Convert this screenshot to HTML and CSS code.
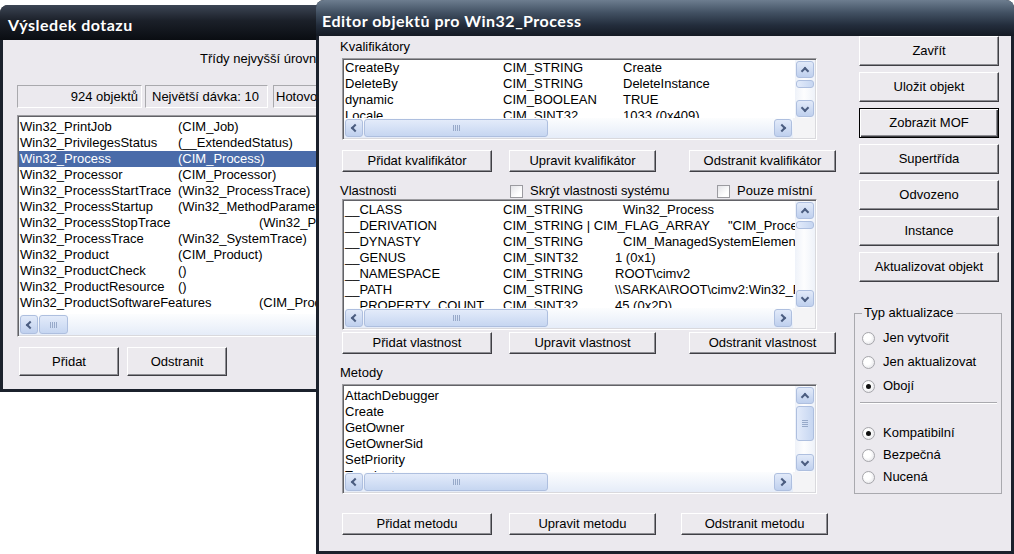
FILE: index.html
```html
<!DOCTYPE html>
<html lang="cs">
<head>
<meta charset="utf-8">
<title>Editor objektů pro Win32_Process</title>
<link rel="stylesheet" href="styles.css">
</head>
<body>
<div class="desk">
  <section class="win win-back">
    <div class="title">Výsledek dotazu</div>
    <div class="body back-body">
      <div class="note">Třídy nejvyšší úrovně</div>
      <div class="status">
        <span class="panel p1">924 objektů</span>
        <span class="panel p2">Největší dávka: 10</span>
        <span class="panel p3">Hotovo</span>
      </div>
      <div class="listbox lb-classes">
        <div class="lb-main">
          <div class="rows rows-classes">
            <div class="row"><span class="cn">Win32_PrintJob</span><span>(CIM_Job)</span></div>
            <div class="row"><span class="cn">Win32_PrivilegesStatus</span><span>(__ExtendedStatus)</span></div>
            <div class="row sel"><span class="cn">Win32_Process</span><span>(CIM_Process)</span></div>
            <div class="row"><span class="cn">Win32_Processor</span><span>(CIM_Processor)</span></div>
            <div class="row"><span class="cn">Win32_ProcessStartTrace</span><span>(Win32_ProcessTrace)</span></div>
            <div class="row"><span class="cn">Win32_ProcessStartup</span><span>(Win32_MethodParameterClass)</span></div>
            <div class="row"><span class="cn far">Win32_ProcessStopTrace</span><span>(Win32_ProcessTrace)</span></div>
            <div class="row"><span class="cn">Win32_ProcessTrace</span><span>(Win32_SystemTrace)</span></div>
            <div class="row"><span class="cn">Win32_Product</span><span>(CIM_Product)</span></div>
            <div class="row"><span class="cn">Win32_ProductCheck</span><span>()</span></div>
            <div class="row"><span class="cn">Win32_ProductResource</span><span>()</span></div>
            <div class="row"><span class="cn far">Win32_ProductSoftwareFeatures</span><span>(CIM_ProductSoftwareFeatures)</span></div>
          </div>
        </div>
        <div class="hscroll hs-tall">
          <span class="sbtn left"></span>
          <span class="track"><span class="thumb hthumb th-back"></span></span>
        </div>
      </div>
      <div class="btnrow back-btns">
        <div class="btn bw">Přidat</div>
        <div class="btn bw">Odstranit</div>
      </div>
    </div>
  </section>

  <section class="win win-front">
    <div class="title">Editor objektů pro Win32_Process</div>
    <div class="body front-body">
      <div class="leftcol">
        <div class="lbl">Kvalifikátory</div>
        <div class="listbox lb-q">
          <div class="lb-main">
            <div class="rows rows-q">
              <div class="row"><span class="cn">CreateBy</span><span class="ct">CIM_STRING</span><span>Create</span></div>
              <div class="row"><span class="cn">DeleteBy</span><span class="ct">CIM_STRING</span><span>DeleteInstance</span></div>
              <div class="row"><span class="cn">dynamic</span><span class="ct">CIM_BOOLEAN</span><span>TRUE</span></div>
              <div class="row"><span class="cn">Locale</span><span class="ct">CIM_SINT32</span><span>1033 (0x409)</span></div>
            </div>
            <div class="vscroll">
              <span class="sbtn up"></span>
              <span class="track"><span class="thumb vthumb vt-small"></span></span>
              <span class="sbtn down"></span>
            </div>
          </div>
          <div class="hscroll">
            <span class="sbtn left"></span>
            <span class="track"><span class="thumb hthumb th-main"></span></span>
            <span class="sbtn right"></span>
            <span class="corner"></span>
          </div>
        </div>
        <div class="btnrow">
          <div class="btn b1">Přidat kvalifikátor</div>
          <div class="btn b2">Upravit kvalifikátor</div>
          <div class="btn b3">Odstranit kvalifikátor</div>
        </div>

        <div class="propbar">
          <span class="lbl plbl">Vlastnosti</span>
          <span class="chk chk1"><span class="cb"></span>Skrýt vlastnosti systému</span>
          <span class="chk"><span class="cb"></span>Pouze místní</span>
        </div>
        <div class="listbox lb-p">
          <div class="lb-main">
            <div class="rows rows-p">
              <div class="row"><span class="cn">__CLASS</span><span class="ct">CIM_STRING</span><span>Win32_Process</span></div>
              <div class="row"><span class="cn">__DERIVATION</span><span class="ct ct-wide">CIM_STRING | CIM_FLAG_ARRAY</span><span>"CIM_Process","CIM_LogicalElement"</span></div>
              <div class="row"><span class="cn">__DYNASTY</span><span class="ct">CIM_STRING</span><span>CIM_ManagedSystemElement</span></div>
              <div class="row"><span class="cn">__GENUS</span><span class="ct ct-short">CIM_SINT32</span><span>1 (0x1)</span></div>
              <div class="row"><span class="cn">__NAMESPACE</span><span class="ct ct-short">CIM_STRING</span><span>ROOT\cimv2</span></div>
              <div class="row"><span class="cn">__PATH</span><span class="ct ct-short">CIM_STRING</span><span>\\SARKA\ROOT\cimv2:Win32_Process</span></div>
              <div class="row"><span class="cn">__PROPERTY_COUNT</span><span class="ct ct-short">CIM_SINT32</span><span>45 (0x2D)</span></div>
            </div>
            <div class="vscroll">
              <span class="sbtn up"></span>
              <span class="track"><span class="thumb vthumb vt-small"></span></span>
              <span class="sbtn down"></span>
            </div>
          </div>
          <div class="hscroll">
            <span class="sbtn left"></span>
            <span class="track"><span class="thumb hthumb th-main"></span></span>
            <span class="sbtn right"></span>
            <span class="corner"></span>
          </div>
        </div>
        <div class="btnrow btnrow-p">
          <div class="btn b1">Přidat vlastnost</div>
          <div class="btn b2">Upravit vlastnost</div>
          <div class="btn b3">Odstranit vlastnost</div>
        </div>

        <div class="lbl mlbl">Metody</div>
        <div class="listbox lb-m">
          <div class="lb-main">
            <div class="rows rows-m">
              <div class="row">AttachDebugger</div>
              <div class="row">Create</div>
              <div class="row">GetOwner</div>
              <div class="row">GetOwnerSid</div>
              <div class="row">SetPriority</div>
              <div class="row">Terminate</div>
            </div>
            <div class="vscroll">
              <span class="sbtn up"></span>
              <span class="track"><span class="thumb vthumb vt-big"></span></span>
              <span class="sbtn down"></span>
            </div>
          </div>
          <div class="hscroll">
            <span class="sbtn left"></span>
            <span class="track"><span class="thumb hthumb th-main"></span></span>
            <span class="sbtn right"></span>
            <span class="corner"></span>
          </div>
        </div>
        <div class="btnrow btnrow-m">
          <div class="btn b1">Přidat metodu</div>
          <div class="btn b2">Upravit metodu</div>
          <div class="btn b3">Odstranit metodu</div>
        </div>
      </div>

      <div class="rightcol">
        <div class="btn rbtn">Zavřít</div>
        <div class="btn rbtn">Uložit objekt</div>
        <div class="btn rbtn default">Zobrazit MOF</div>
        <div class="btn rbtn">Supertřída</div>
        <div class="btn rbtn">Odvozeno</div>
        <div class="btn rbtn">Instance</div>
        <div class="btn rbtn">Aktualizovat objekt</div>

        <fieldset class="group">
          <legend>Typ aktualizace</legend>
          <div class="radio r1"><span class="rb"></span>Jen vytvořit</div>
          <div class="radio r1"><span class="rb"></span>Jen aktualizovat</div>
          <div class="radio r1 on"><span class="rb"></span>Obojí</div>
          <div class="sep"></div>
          <div class="radio r2 on"><span class="rb"></span>Kompatibilní</div>
          <div class="radio r2"><span class="rb"></span>Bezpečná</div>
          <div class="radio r2"><span class="rb"></span>Nucená</div>
        </fieldset>
      </div>
    </div>
  </section>
</div>
</body>
</html>
```

FILE: styles.css
```css
* { box-sizing: border-box; }
html, body { margin: 0; padding: 0; }
body {
  width: 1014px;
  height: 554px;
  overflow: hidden;
  background: #fff;
  color: #000;
  font: 400 13px/16px "Liberation Sans", Arial, sans-serif;
}
.desk { position: relative; width: 1014px; height: 554px; }

/* windows */
.win {
  position: absolute;
  display: flex;
  flex-direction: column;
  background: #1b212c;
  border-radius: 8px 8px 0 0;
  padding: 0 3px 3px;
  overflow: hidden;
}
.win-back { left: 0; top: 5px; width: 360px; height: 387px; }
.win-front { left: 316px; top: 0; width: 698px; height: 554px; }

.title {
  flex: none;
  display: flex;
  align-items: center;
  margin: 0 -3px;
  padding-top: 5px;
  color: #fff;
  font: bold 16px/16px Lato, "DejaVu Sans", sans-serif;
  letter-spacing: 0.5px;
  white-space: nowrap;
}
.win-back .title {
  height: 35px;
  padding-left: 8px;
  background: linear-gradient(#3c4554, #1b2029 45%, #0a0d12);
}
.win-front .title {
  height: 36px;
  padding-left: 6px;
  background: linear-gradient(#6d7d8f, #425163 35%, #232d3c 70%, #141a23);
}
.body { flex: 1; min-height: 0; background: #ebe9ee; }

/* back window */
.back-body { padding-left: 14px; display: flex; flex-direction: column; align-items: flex-start; }
.note { margin-top: 11px; padding-left: 183px; white-space: nowrap; }
.status { display: flex; margin-top: 18px; height: 23px; white-space: nowrap; }
.panel {
  display: block;
  height: 23px;
  padding-top: 3px;
  border: 1px solid;
  border-color: #a9a9ad #fff #fff #a9a9ad;
}
.p1 { width: 125px; text-align: right; padding-right: 3px; }
.p2 { width: 123px; margin-left: 3px; padding-left: 6px; }
.p3 { width: 120px; margin-left: 5px; padding-left: 2px; }

.lb-classes { margin-top: 7px; width: 400px; height: 222px; }
.rows-classes { padding-top: 2px; }
.rows-classes .cn { width: 158px; }
.rows-classes .cn.far { width: 239px; }
.row.sel { background: #4a6ba9; color: #fff; }
.back-btns { margin-top: 11px; padding-left: 0; gap: 8px; }
.bw { width: 100px; height: 29px; }

/* list boxes */
.listbox {
  flex: none;
  display: flex;
  flex-direction: column;
  background: #fff;
  border: 1px solid;
  border-color: #9c9ca0 #fff #fff #9c9ca0;
  box-shadow: inset 1px 1px 0 #626267, inset -1px -1px 0 #d9d9dd;
  padding: 1px;
}
.lb-main { flex: 1; min-height: 0; display: flex; }
.rows { flex: 1; min-width: 0; overflow: hidden; white-space: nowrap; }
.row { display: flex; height: 16px; padding-left: 1px; }
.cn, .ct { flex: none; white-space: nowrap; }
.rows-q .cn, .rows-p .cn { width: 158px; }
.ct { width: 120px; }
.ct-short { width: 112px; }
.ct-wide { width: 225px; }
.rows-p { padding-top: 1px; }
.rows-m { padding-top: 2px; }

/* scrollbars */
.vscroll {
  flex: none;
  width: 20px;
  display: flex;
  flex-direction: column;
  background: linear-gradient(to right, #eef2f9, #fdfdfe 45%, #eef2f9);
}
.hscroll {
  flex: none;
  height: 20px;
  display: flex;
  background: linear-gradient(#fcfdfe, #e5ecf8);
}
.hs-tall { height: 21px; }
.sbtn {
  flex: none;
  margin: 1px;
  border: 1px solid #aebfdf;
  border-radius: 3px;
  background: linear-gradient(#e2eaf9, #bfd0ee);
  display: flex;
  align-items: center;
  justify-content: center;
}
.hscroll .sbtn { width: 18px; }
.vscroll .sbtn { height: 17px; }
.sbtn::before {
  content: "";
  width: 4px;
  height: 4px;
  border: solid #4b5d80;
  border-width: 2px 0 0 2px;
}
.left::before { transform: translateX(1px) rotate(-45deg); }
.right::before { transform: translateX(-1px) rotate(135deg); }
.up::before { transform: translateY(1px) rotate(45deg); }
.down::before { transform: translateY(-1px) rotate(225deg); }
.track { flex: 1; min-width: 0; min-height: 0; display: flex; }
.vscroll .track { flex-direction: column; }
.corner { flex: none; width: 22px; background: #f4f4f6; }
.thumb {
  flex: none;
  border: 1px solid #aebfdf;
  border-radius: 3px;
  display: flex;
  align-items: center;
  justify-content: center;
}
.hthumb { margin: 1px 0; background: linear-gradient(#e3ebfa, #c6d6f1); }
.vthumb { margin: 1px 1px 0; background: linear-gradient(to right, #e3ebfa, #c6d6f1); }
.hthumb::before {
  content: "";
  width: 7px;
  height: 6px;
  background: repeating-linear-gradient(to right, #97a9c9 0 1px, transparent 1px 2px);
}
.th-main { width: 184px; }
.th-back { width: 29px; }
.vt-small { height: 8px; }
.vt-big { height: 35px; }
.vt-big::before {
  content: "";
  width: 6px;
  height: 7px;
  background: repeating-linear-gradient(#97a9c9 0 1px, transparent 1px 2px);
}

/* buttons */
.btn {
  display: flex;
  align-items: center;
  justify-content: center;
  font-weight: 400;
  color: #000;
  background: #eceaee;
  border: 1px solid;
  border-color: #fff #3f3f44 #3f3f44 #fff;
  box-shadow: inset -1px -1px 0 #8e8e93;
  white-space: nowrap;
}
.btn.default {
  border-color: #000;
  box-shadow: inset 1px 1px 0 #fff, inset -1px -1px 0 #3f3f44, inset -2px -2px 0 #8e8e93;
}
.btnrow { flex: none; display: flex; padding-left: 2px; margin-top: 10px; }
.btnrow .b1 { width: 150px; height: 22px; }
.btnrow .b2 { width: 147px; height: 22px; margin-left: 17px; }
.btnrow .b3 { width: 147px; height: 22px; margin-left: 33px; }
.btnrow-p { margin-top: 2px; }
.btnrow-m { margin-top: 19px; }
.btnrow-m .b3 { margin-left: 25px; }

/* front window */
.front-body { display: flex; gap: 18px; padding-left: 21px; }
.leftcol { width: 496px; display: flex; flex-direction: column; padding-top: 3px; }
.lbl { flex: none; height: 16px; white-space: nowrap; }
.lb-q { margin: 3px 0 0 2px; width: 475px; height: 82px; }
.propbar { flex: none; display: flex; align-items: center; height: 16px; margin-top: 11px; white-space: nowrap; }
.plbl { width: 170px; }
.chk { display: flex; align-items: center; gap: 7px; }
.chk1 { width: 207px; }
.cb {
  flex: none;
  width: 13px;
  height: 13px;
  border: 1px solid #9b9ba0;
  background: linear-gradient(135deg, #e4e4e8, #fff 70%);
}
.lb-p { margin: 0 0 0 2px; width: 475px; height: 131px; }
.mlbl { margin-top: 11px; }
.lb-m { margin: 3px 0 0 2px; width: 475px; height: 110px; }

.rightcol { width: 148px; display: flex; flex-direction: column; }
.rbtn { flex: none; margin: 0 0 6px 5px; width: 140px; height: 30px; }

.group {
  margin: 17px 0 0;
  min-width: 0;
  width: 148px;
  height: 189px;
  padding: 5px 4px 5px 7px;
  border: 1px solid #a9a9ae;
}
.group legend { padding: 0 2px; line-height: 16px; }
.radio { display: flex; align-items: center; white-space: nowrap; }
.r1 { height: 24px; }
.r2 { height: 22px; }
.rb {
  flex: none;
  width: 13px;
  height: 13px;
  margin-right: 8px;
  border-radius: 50%;
  border: 1px solid #a6a6ab;
  background: radial-gradient(circle at 40% 40%, #fff 35%, #dcdce1);
  display: flex;
  align-items: center;
  justify-content: center;
}
.radio.on .rb::after {
  content: "";
  width: 5px;
  height: 5px;
  border-radius: 50%;
  background: #111;
}
.sep {
  height: 2px;
  margin: 4px 0 18px -2px;
  border-top: 1px solid #a9a9ae;
  border-bottom: 1px solid #fff;
}
```
